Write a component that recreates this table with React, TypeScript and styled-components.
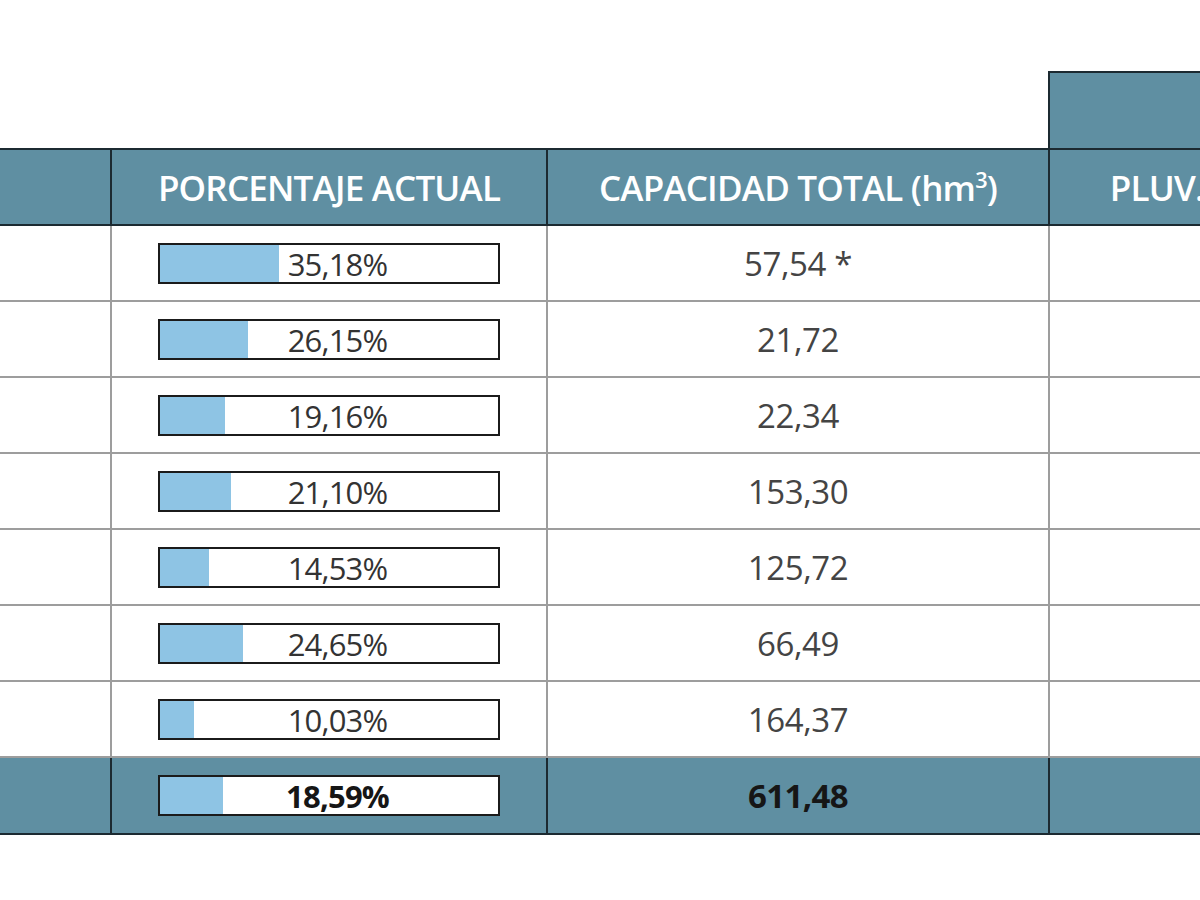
import styled, { createGlobalStyle } from "styled-components";

const GlobalStyle = createGlobalStyle`
  html, body {
    margin: 0;
    padding: 0;
    background: #ffffff;
    overflow: hidden;
  }
  body {
    font-family: "Open Sans", "Liberation Sans", sans-serif;
  }
`;

const TEAL = "#5f8fa2";
const DARK = "#1c2a31";
const GRID = "#9d9d9d";

const rows = [
  { pct: 35.18, cap: "57,54 *" },
  { pct: 26.15, cap: "21,72" },
  { pct: 19.16, cap: "22,34" },
  { pct: 21.1, cap: "153,30" },
  { pct: 14.53, cap: "125,72" },
  { pct: 24.65, cap: "66,49" },
  { pct: 10.03, cap: "164,37" },
];

const total = { pct: 18.59, cap: "611,48" };

const fmt = (n: number) => n.toFixed(2).replace(".", ",") + "%";

export default function App() {
  return (
    <>
      <GlobalStyle />
      <Viewport>
        <Table>
          <colgroup>
            <col style={{ width: 600 }} />
            <col style={{ width: 436 }} />
            <col style={{ width: 502 }} />
            <col style={{ width: 382 }} />
            <col style={{ width: 700 }} />
          </colgroup>
          <thead>
            <GroupRow>
              <BlankTh colSpan={3} />
              <GroupTh colSpan={2}>PLUVIOMETRÍA (l/m²)</GroupTh>
            </GroupRow>
            <HeadRow>
              <HeadTh>EMBALSE</HeadTh>
              <HeadTh>PORCENTAJE ACTUAL</HeadTh>
              <HeadTh>
                CAPACIDAD TOTAL (hm<sup>3</sup>)
              </HeadTh>
              <HeadTh>PLUV. SEMANAL</HeadTh>
              <HeadTh>PLUV. ACUMULADA</HeadTh>
            </HeadRow>
          </thead>
          <tbody>
            {rows.map((r, i) => (
              <DataRow key={i}>
                <Cell />
                <Cell>
                  <Bar $pct={r.pct}>
                    <BarLabel>{fmt(r.pct)}</BarLabel>
                  </Bar>
                </Cell>
                <Cell>{r.cap}</Cell>
                <Cell />
                <Cell />
              </DataRow>
            ))}
            <TotalRow>
              <TotalCell />
              <TotalCell>
                <Bar $pct={total.pct}>
                  <BarLabel $bold>{fmt(total.pct)}</BarLabel>
                </Bar>
              </TotalCell>
              <TotalCell>{total.cap}</TotalCell>
              <TotalCell />
              <TotalCell />
            </TotalRow>
          </tbody>
        </Table>
      </Viewport>
    </>
  );
}

const Viewport = styled.div`
  width: 1200px;
  height: 900px;
  overflow: hidden;
  padding-top: 71px;
  box-sizing: border-box;
`;

const Table = styled.table`
  margin-left: -490px;
  width: 2620px;
  table-layout: fixed;
  border-collapse: collapse;
`;

const GroupRow = styled.tr`
  height: 77px;
`;

const BlankTh = styled.th`
  border: none;
  padding: 0;
`;

const GroupTh = styled.th`
  background: ${TEAL};
  border: 2px solid ${DARK};
  color: #ffffff;
  font-size: 35px;
  font-weight: 600;
  letter-spacing: -0.8px;
  text-align: center;
  vertical-align: middle;
`;

const HeadRow = styled.tr`
  height: 76px;
`;

const HeadTh = styled.th`
  background: ${TEAL};
  border: 2px solid ${DARK};
  color: #ffffff;
  font-size: 35px;
  font-weight: 600;
  letter-spacing: -0.8px;
  white-space: nowrap;
  text-align: center;
  vertical-align: middle;
  padding: 0;

  sup {
    font-size: 0.62em;
    line-height: 0;
  }
`;

const DataRow = styled.tr`
  height: 76px;

  &:last-child td {
    border-bottom-style: none;
  }
`;

const Cell = styled.td`
  border: 2px solid ${GRID};
  color: #444444;
  font-size: 33px;
  letter-spacing: -0.4px;
  text-align: center;
  vertical-align: middle;
  padding: 0;
`;

const TotalRow = styled.tr`
  height: 77px;
`;

const TotalCell = styled.td`
  background: ${TEAL};
  border: 2px solid ${DARK};
  color: #161616;
  font-size: 33px;
  font-weight: 700;
  letter-spacing: -0.6px;
  text-align: center;
  vertical-align: middle;
  padding: 0;
`;

const Bar = styled.div<{ $pct: number }>`
  box-sizing: border-box;
  width: 342px;
  height: 41px;
  margin: 0 auto;
  border: 2px solid #1b1b1b;
  background: linear-gradient(
    to right,
    #8ec4e4 ${(p) => p.$pct}%,
    #ffffff ${(p) => p.$pct}%
  );
  display: flex;
  align-items: center;
  justify-content: center;
`;

const BarLabel = styled.span<{ $bold?: boolean }>`
  padding-left: 17px;
  padding-top: 2px;
  font-size: 31px;
  line-height: 1;
  letter-spacing: -0.8px;
  color: ${(p) => (p.$bold ? "#161616" : "#333333")};
  font-weight: ${(p) => (p.$bold ? 700 : 400)};
`;
